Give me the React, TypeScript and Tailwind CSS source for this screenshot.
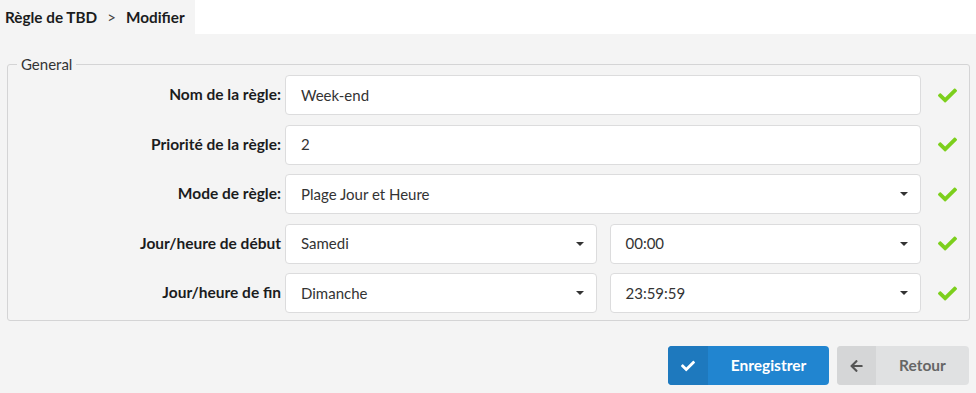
import React from "react";

const font = { fontFamily: "Lato, 'Open Sans', sans-serif" };

function Check() {
  return (
    <svg viewBox="0 0 512 512" className="h-[19px] w-[19px]" fill="#7ccf1c">
      <path d="M173.898 439.404l-166.4-166.4c-9.997-9.997-9.997-26.206 0-36.204l36.203-36.204c9.997-9.998 26.207-9.998 36.204 0L192 312.69 432.095 72.596c9.997-9.997 26.207-9.997 36.204 0l36.203 36.204c9.997 9.997 9.997 26.206 0 36.204l-294.4 294.401c-9.998 9.997-26.207 9.997-36.204-.001z" />
    </svg>
  );
}

function Caret() {
  return (
    <span className="h-0 w-0 border-x-[4px] border-t-[4px] border-x-transparent border-t-[#333]" />
  );
}

function Field({ value, select }: { value: string; select?: boolean }) {
  return (
    <div className="flex h-[40px] flex-1 items-center justify-between rounded-[4px] border border-[#dcdcdd] bg-white pl-[15px] pr-[12px] text-[15px] text-[#333]">
      <span>{value}</span>
      {select && <Caret />}
    </div>
  );
}

function Row({ label, children }: { label: string; children: React.ReactNode }) {
  return (
    <div className="flex items-center">
      <div className="w-[273px] text-right text-[15.5px] font-bold text-[#1b1c1d]">{label}</div>
      <div className="ml-[4px] flex flex-1 gap-[13px]">{children}</div>
      <div className="flex w-[48px] justify-center pl-[4px]">
        <Check />
      </div>
    </div>
  );
}

export default function App() {
  return (
    <div className="min-h-[393px] w-[976px] bg-[#f4f4f4]" style={font}>
      <div className="flex h-[34px]">
        <div className="flex w-[195px] items-center bg-[#f4f4f4] pl-[5px] text-[15.3px] font-bold text-[#1b1c1d]">
          <span>Règle de TBD</span>
          <span className="mx-[10px] text-[15px] font-normal text-[#444]">&gt;</span>
          <span>Modifier</span>
        </div>
        <div className="flex-1 bg-white" />
      </div>

      <fieldset className="ml-[7px] mr-[6px] mt-[20px] rounded-[3px] border border-[#d4d4d5] pb-[7px]">
        <legend className="ml-[9px] px-[4px] text-[15px] leading-[20px] text-[#333]">General</legend>
        <div className="mt-[1px] flex flex-col gap-[9.5px]">
          <Row label="Nom de la règle:">
            <Field value="Week-end" />
          </Row>
          <Row label="Priorité de la règle:">
            <Field value="2" />
          </Row>
          <Row label="Mode de règle:">
            <Field value="Plage Jour et Heure" select />
          </Row>
          <Row label="Jour/heure de début">
            <Field value="Samedi" select />
            <Field value="00:00" select />
          </Row>
          <Row label="Jour/heure de fin">
            <Field value="Dimanche" select />
            <Field value="23:59:59" select />
          </Row>
        </div>
      </fieldset>

      <div className="mt-[25px] flex justify-end gap-[8px] pr-[7px]">
        <button className="flex h-[39px] w-[161px] overflow-hidden rounded-[4px] bg-[#2185d0] text-[15.5px] font-bold text-white">
          <span className="flex h-full w-[40px] items-center justify-center bg-[#1e79be]">
            <svg viewBox="0 0 512 512" className="h-[14px] w-[14px]" fill="white">
              <path d="M173.898 439.404l-166.4-166.4c-9.997-9.997-9.997-26.206 0-36.204l36.203-36.204c9.997-9.998 26.207-9.998 36.204 0L192 312.69 432.095 72.596c9.997-9.997 26.207-9.997 36.204 0l36.203 36.204c9.997 9.997 9.997 26.206 0 36.204l-294.4 294.401c-9.998 9.997-26.207 9.997-36.204-.001z" />
            </svg>
          </span>
          <span className="flex flex-1 items-center justify-center">Enregistrer</span>
        </button>
        <button className="flex h-[39px] w-[132px] overflow-hidden rounded-[4px] bg-[#e0e1e2] text-[15.5px] font-bold text-[#666]">
          <span className="flex h-full w-[39px] items-center justify-center bg-[#d5d6d7]">
            <svg viewBox="0 0 448 512" className="h-[14px] w-[13px]" fill="#555">
              <path d="M257.5 445.1l-22.2 22.2c-9.4 9.4-24.6 9.4-33.9 0L7 273c-9.4-9.4-9.4-24.6 0-33.9L201.4 44.7c9.4-9.4 24.6-9.4 33.9 0l22.2 22.2c9.5 9.5 9.3 25-.4 34.3L136.6 216H424c13.3 0 24 10.7 24 24v32c0 13.3-10.7 24-24 24H136.6l120.5 114.8c9.8 9.3 10 24.8.4 34.3z" />
            </svg>
          </span>
          <span className="flex flex-1 items-center justify-center">Retour</span>
        </button>
      </div>
    </div>
  );
}
